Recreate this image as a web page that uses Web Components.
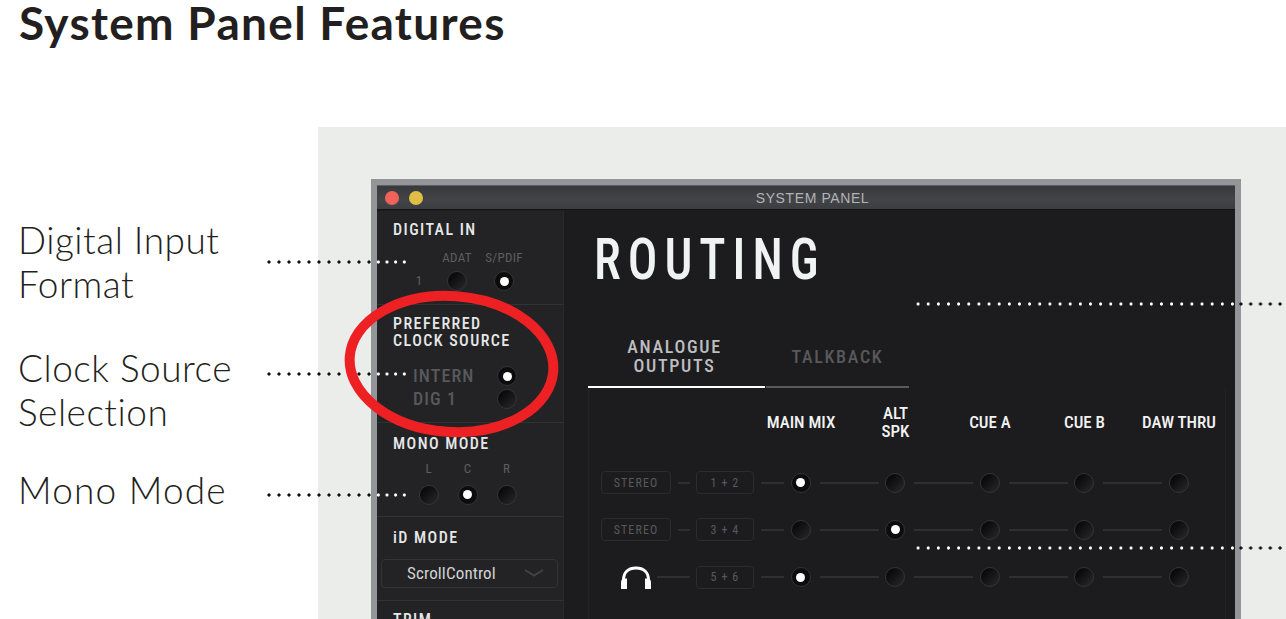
<!DOCTYPE html>
<html>
<head>
<meta charset="utf-8">
<title>System Panel Features</title>
<style>
  html, body { margin: 0; height: 100%; background: #fff; overflow: hidden; }
</style>
</head>
<body>
<feature-page>
  <span slot="title">System Panel Features</span>
  <feature-label slot="labels" style="--top: 91px">Digital Input<br>Format</feature-label>
  <feature-label slot="labels" style="--top: 40px">Clock Source<br>Selection</feature-label>
  <feature-label slot="labels" style="--top: 34px; letter-spacing: 1.2px">Mono Mode</feature-label>
  <system-window slot="stage" heading="SYSTEM PANEL">
    <side-section slot="side" heading="DIGITAL IN" style="--h: 94px">
      <digital-in></digital-in>
    </side-section>
    <side-section slot="side" heading="PREFERRED<br>CLOCK SOURCE" style="--h: 118px">
      <clock-source></clock-source>
    </side-section>
    <side-section slot="side" heading="MONO MODE" style="--h: 94px; --pad: 13px">
      <mono-mode></mono-mode>
    </side-section>
    <side-section slot="side" heading="iD MODE" style="--h: 84px; --pad: 13px">
      <id-select>ScrollControl</id-select>
    </side-section>
    <side-section slot="side" heading="TRIM" style="--h: 40px"></side-section>
    <routing-view slot="main"></routing-view>
  </system-window>
</feature-page>
<dot-leader style="--x: 264.3px; --y: 260px; --a: 110px; --b: 35px; --sa: 10px; --sb: 8.67px; --ca: #111; --cb: #fff"></dot-leader>
<dot-leader style="--x: 264.3px; --y: 372px; --a: 110px; --b: 35px; --sa: 10px; --sb: 8.67px; --ca: #111; --cb: #fff"></dot-leader>
<dot-leader style="--x: 264.3px; --y: 493px; --a: 110px; --b: 35px; --sa: 10px; --sb: 8.67px; --ca: #111; --cb: #fff"></dot-leader>
<dot-leader style="--x: 913px; --y: 302px; --a: 323px; --b: 50px; --sa: 10.15px; --sb: 9.8px; --ca: #fff; --cb: #111"></dot-leader>
<dot-leader style="--x: 913px; --y: 546px; --a: 323px; --b: 50px; --sa: 10.15px; --sb: 9.8px; --ca: #fff; --cb: #111"></dot-leader>
<red-circle></red-circle>

<script>
const din = `font-family: Roboto, sans-serif; font-stretch: 75%;`;

class FeaturePage extends HTMLElement {
  constructor() {
    super();
    this.attachShadow({ mode: 'open' }).innerHTML = `
      <style>
        :host { display: flex; flex-direction: column; height: 619px; overflow: hidden; }
        h1 { flex-shrink: 0; margin: 0; height: 127px; padding-left: 19px; box-sizing: border-box; font: 700 46px/46px Lato, sans-serif; letter-spacing: 1.3px; color: #231f20; }
        .row { display: flex; flex: auto; min-height: 0; }
        .labels { width: 318px; flex-shrink: 0; padding-left: 18px; box-sizing: border-box; display: flex; flex-direction: column; }
        .stage { flex: auto; background: #ebedea; padding: 52px 45px 0 53px; min-height: 0; overflow: hidden; }
      </style>
      <h1><slot name="title"></slot></h1>
      <div class="row">
        <div class="labels"><slot name="labels"></slot></div>
        <div class="stage"><slot name="stage"></slot></div>
      </div>`;
  }
}

class FeatureLabel extends HTMLElement {
  constructor() {
    super();
    this.attachShadow({ mode: 'open' }).innerHTML = `
      <style>
        :host { display: block; margin-top: var(--top); font: 300 37px/44px Lato, sans-serif; letter-spacing: .5px; color: #231f20; }
      </style>
      <slot></slot>`;
  }
}

class SystemWindow extends HTMLElement {
  constructor() {
    super();
    this.attachShadow({ mode: 'open' }).innerHTML = `
      <style>
        :host { display: block; border: solid #939598; border-width: 6px 6px 0; background: #1c1c1e; height: 500px; }
        .bar { height: 25px; box-sizing: border-box; border-top: 1px solid #5f6063; border-bottom: 1px solid #141415; background: linear-gradient(#38393c, #434447 60%, #3c3d40); display: flex; align-items: center; position: relative; padding-left: 8px; gap: 10px; }
        .dot { width: 14px; height: 14px; border-radius: 50%; }
        .title { position: absolute; left: 13px; right: 0; text-align: center; font: 14px "Liberation Sans", sans-serif; letter-spacing: .6px; color: #b1b3b6; }
        .body { display: flex; }
        .side { width: 187px; flex-shrink: 0; padding-top: 1px; }
        .main { flex: auto; min-width: 0; }
      </style>
      <div class="bar">
        <span class="dot" style="background:#f1635a"></span>
        <span class="dot" style="background:#e2bd45"></span>
        <span class="title">${this.getAttribute('heading')}</span>
      </div>
      <div class="body">
        <div class="side"><slot name="side"></slot></div>
        <div class="main"><slot name="main"></slot></div>
      </div>`;
  }
}

class SideSection extends HTMLElement {
  constructor() {
    super();
    this.attachShadow({ mode: 'open' }).innerHTML = `
      <style>
        :host { display: block; height: var(--h); box-sizing: border-box; background: #232325; border-right: 1px solid #2a2a2c; border-bottom: 1px solid #323234; padding-top: var(--pad, 11px); }
        h2 { margin: 0 0 0 16px; ${din} font-weight: 500; font-size: 16px; line-height: 16.5px; letter-spacing: 1.45px; color: #e6e7e8; }
      </style>
      <h2>${this.getAttribute('heading')}</h2>
      <slot></slot>`;
  }
}

class SysRadio extends HTMLElement {
  constructor() {
    super();
    this.attachShadow({ mode: 'open' }).innerHTML = `
      <style>
        :host { flex-shrink: 0; width: 20px; height: 20px; box-sizing: border-box; border-radius: 50%; border: 1px solid #343437; background: linear-gradient(135deg, #0b0b0c 25%, #2a2a2c); display: flex; align-items: center; justify-content: center; }
        :host([on]) { background: #0c0c0d; }
        i { display: none; width: 9px; height: 9px; border-radius: 50%; background: #fff; }
        :host([on]) i { display: block; }
      </style>
      <i></i>`;
  }
}

class DigitalIn extends HTMLElement {
  constructor() {
    super();
    this.attachShadow({ mode: 'open' }).innerHTML = `
      <style>
        :host { display: grid; grid-template-columns: 38px 38px 38px; justify-items: center; align-items: center; padding: 11.5px 0 0 23px; ${din} font-size: 13px; line-height: 16px; color: #5d5e60; letter-spacing: .3px; }
        span { white-space: nowrap; }
      </style>
      <span></span><span>ADAT</span><span style="margin-left:18px">S/PDIF</span>
      <span style="margin-top:5px">1</span><sys-radio style="margin-top:5px"></sys-radio><sys-radio on style="margin:5px 0 0 18px"></sys-radio>`;
  }
}

class ClockSource extends HTMLElement {
  constructor() {
    super();
    this.attachShadow({ mode: 'open' }).innerHTML = `
      <style>
        :host { display: block; padding: 15.5px 0 0 36px; ${din} font-weight: 500; font-size: 18px; line-height: 23px; letter-spacing: 1.1px; color: #58595b; }
        div { display: flex; justify-content: space-between; align-items: center; width: 104px; height: 23px; }
        span { margin-bottom: 2px; }
      </style>
      <div><span>INTERN</span><sys-radio on></sys-radio></div>
      <div><span>DIG 1</span><sys-radio></sys-radio></div>`;
  }
}

class MonoMode extends HTMLElement {
  constructor() {
    super();
    this.attachShadow({ mode: 'open' }).innerHTML = `
      <style>
        :host { display: grid; grid-template-columns: repeat(3, 39px); justify-items: center; row-gap: 8px; padding: 8px 0 0 32px; ${din} font-size: 13px; line-height: 16px; color: #5d5e60; }
      </style>
      <span>L</span><span>C</span><span>R</span>
      <sys-radio></sys-radio><sys-radio on></sys-radio><sys-radio></sys-radio>`;
  }
}

class IdSelect extends HTMLElement {
  constructor() {
    super();
    this.attachShadow({ mode: 'open' }).innerHTML = `
      <style>
        :host { display: flex; align-items: center; justify-content: space-between; box-sizing: border-box; width: 177px; height: 29px; margin: 12px 0 0 4px; padding: 0 13px 0 25px; border: 1px solid #343437; border-radius: 4px; ${din} font-size: 17px; letter-spacing: .15px; color: #d1d3d4; }
        svg { display: block; }
      </style>
      <slot></slot>
      <svg width="20" height="8" viewBox="0 0 20 8"><path d="M1 1l9 5.500 9-5.500" fill="none" stroke="#414244" stroke-width="2"/></svg>`;
  }
}

class RoutingView extends HTMLElement {
  constructor() {
    super();
    this.attachShadow({ mode: 'open' }).innerHTML = `
      <style>
        :host { display: block; padding-top: 16px; }
        h1 { margin: 0 0 0 30px; ${din} font-weight: 500; font-size: 58px; line-height: 66px; letter-spacing: 8.2px; color: #f1f2f2; transform: scaleX(.85); transform-origin: left; }
        .tabs { display: flex; margin: 41px 0 0 24px; }
        .tab { height: 55px; box-sizing: border-box; padding-bottom: 7px; display: flex; align-items: center; justify-content: center; text-align: center; ${din} font-weight: 500; font-size: 18px; line-height: 19px; letter-spacing: 1.7px; }
        .a { width: 177px; padding-right: 4px; border-bottom: 2px solid #fff; color: #bcbec0; }
        .b { width: 143px; margin-left: 1px; border-bottom: 2px solid #58595b; color: #58595b; }
        .panel { margin: 0 9px 0 24px; border: solid #232325; border-width: 0 1px; height: 300px; }
        .heads { display: grid; grid-template-columns: repeat(5, 94.5px); height: 71px; box-sizing: border-box; padding: 16px 0 0 164.75px; align-items: center; text-align: center; align-content: start; ${din} font-weight: 500; font-size: 17px; line-height: 18px; color: #f1f2f2; grid-auto-rows: 36px; }
      </style>
      <h1>ROUTING</h1>
      <div class="tabs">
        <div class="tab a">ANALOGUE<br>OUTPUTS</div>
        <div class="tab b">TALKBACK</div>
      </div>
      <div class="panel">
        <div class="heads"><span>MAIN MIX</span><span>ALT<br>SPK</span><span>CUE A</span><span>CUE B</span><span>DAW THRU</span></div>
        <route-row mode="STEREO" pair="1 + 2" on="0"></route-row>
        <route-row mode="STEREO" pair="3 + 4" on="1"></route-row>
        <route-row pair="5 + 6" on="0"></route-row>
      </div>`;
  }
}

class RouteRow extends HTMLElement {
  constructor() {
    super();
    const mode = this.getAttribute('mode');
    const on = Number(this.getAttribute('on'));
    let dots = '';
    for (let i = 0; i < 5; i++) {
      dots += `<sys-radio ${i === on ? 'on' : ''}></sys-radio>`;
      if (i < 4) dots += '<i class="line long"></i>';
    }
    const lead = mode
      ? `<span class="box mode">${mode}</span><i class="line dash"></i>`
      : `<svg class="phones" width="30" height="23" viewBox="0 0 30 23"><path d="M2.500 18v-4C2.500 6 7.500 2 15 2s12.500 4 12.500 12v4" fill="none" stroke="#fff" stroke-width="3"/><path d="M0 23v-6.500a4 4 0 0 1 4-4h2V23zM30 23v-6.500a4 4 0 0 0-4-4h-2V23z" fill="#fff"/></svg><i class="line phone-line"></i>`;
    this.attachShadow({ mode: 'open' }).innerHTML = `
      <style>
        :host { display: flex; align-items: center; height: 47.25px; padding-left: 12px; box-sizing: border-box; color: #58595b; }
        .box { display: flex; align-items: center; justify-content: center; box-sizing: border-box; height: 23px; border: 1px solid #2b2c2e; border-radius: 4px; ${din} font-size: 12px; line-height: 1; letter-spacing: 1.1px; }
        .mode { width: 70px; }
        .pair { width: 58px; }
        .line { display: block; height: 2px; background: #2f2f31; flex-shrink: 0; }
        .dash { width: 12px; margin: 0 6px 0 7px; }
        .phones { margin-left: 20px; }
        .phone-line { width: 33px; margin: 0 6px; }
        .in { width: 23px; margin: 0 7px 0 6.5px; }
        .long { width: 59px; margin: 0 6.5px 0 9px; }
      </style>
      ${lead}<span class="box pair">${this.getAttribute('pair')}</span><i class="line in"></i>${dots}`;
  }
}

class DotLeader extends HTMLElement {
  constructor() {
    super();
    this.attachShadow({ mode: 'open' }).innerHTML = `
      <style>
        :host { position: absolute; left: var(--x); top: var(--y); display: flex; height: 4px; }
        i { display: block; height: 4px; }
        .a { width: var(--a); background: radial-gradient(circle, var(--ca) 1.3px, transparent 1.9px) 0 0 / var(--sa) 4px repeat-x; }
        .b { width: var(--b); background: radial-gradient(circle, var(--cb) 1.3px, transparent 1.9px) 0 0 / var(--sb) 4px repeat-x; }
      </style>
      <i class="a"></i><i class="b"></i>`;
  }
}

class RedCircle extends HTMLElement {
  constructor() {
    super();
    this.attachShadow({ mode: 'open' }).innerHTML = `
      <style>
        :host { position: absolute; left: 335px; top: 280px; width: 235px; height: 170px; pointer-events: none; }
        svg { display: block; }
      </style>
      <svg width="235" height="170" viewBox="0 0 235 170"><ellipse cx="116.5" cy="84" rx="102" ry="68" fill="none" stroke="#ed2024" stroke-width="10" transform="rotate(4 116.5 84)"/></svg>`;
  }
}

customElements.define('feature-page', FeaturePage);
customElements.define('feature-label', FeatureLabel);
customElements.define('system-window', SystemWindow);
customElements.define('side-section', SideSection);
customElements.define('sys-radio', SysRadio);
customElements.define('digital-in', DigitalIn);
customElements.define('clock-source', ClockSource);
customElements.define('mono-mode', MonoMode);
customElements.define('id-select', IdSelect);
customElements.define('routing-view', RoutingView);
customElements.define('route-row', RouteRow);
customElements.define('dot-leader', DotLeader);
customElements.define('red-circle', RedCircle);
</script>
</body>
</html>
